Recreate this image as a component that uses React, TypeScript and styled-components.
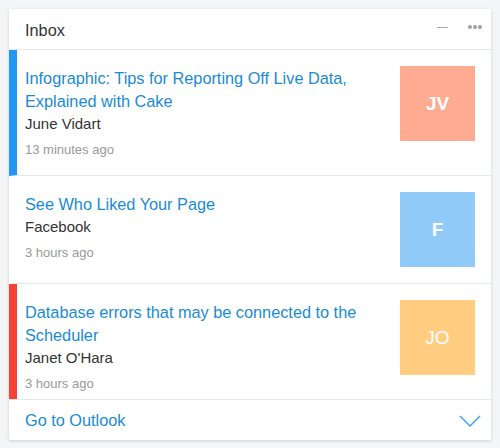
import styled, { createGlobalStyle } from 'styled-components';

const GlobalStyle = createGlobalStyle`
    body {
        margin: 0;
        background: #f4f5f7;
        font-family: "Liberation Sans", Arial, sans-serif;
    }
`;

const Card = styled.div`
    width: 482px;
    margin: 9px;
    background: #fff;
    box-shadow: 0 1px 3px rgba(0, 0, 0, 0.16);
`;

const Header = styled.div`
    display: flex;
    align-items: center;
    justify-content: space-between;
    height: 41px;
    padding: 2px 9px 0 16px;
    box-sizing: border-box;
    border-bottom: 1px solid #e6e7e8;
`;

const Title = styled.h3`
    margin: 0;
    font-size: 16.3px;
    font-weight: normal;
    color: #333;
`;

const Tools = styled.div`
    display: flex;
    align-items: center;
    gap: 20px;
    align-self: flex-start;
    padding-top: 14px;
`;

const Dash = styled.span`
    display: block;
    width: 11px;
    height: 1px;
    background: #a9a9a9;
`;

const Dots = styled.span`
    display: flex;
    gap: 1px;

    & > i {
        display: block;
        width: 4px;
        height: 4px;
        border-radius: 50%;
        background: #a0a0a0;
    }
`;

const List = styled.div`
    height: 349px;
    overflow: hidden;
`;

const Item = styled.div<{ $accent?: string }>`
    display: flex;
    justify-content: space-between;
    gap: 12px;
    padding: 16px 16px 16px 8px;
    border-left: 8px solid ${p => p.$accent || '#fff'};
    border-bottom: 1px solid #e6e7e8;
`;

const Body = styled.div`
    display: flex;
    flex-direction: column;
    padding-top: 1px;
`;

const Subject = styled.a`
    font-size: 16.3px;
    line-height: 23px;
    color: #1a8bd3;
    text-decoration: none;
`;

const Sender = styled.p`
    margin: 0;
    font-size: 15px;
    line-height: 21px;
    color: #333;
`;

const Time = styled.p`
    margin: 7px 0 0;
    font-size: 13px;
    line-height: 18px;
    color: #999;
`;

const Avatar = styled.div<{ $bg: string; $bold?: boolean }>`
    display: flex;
    align-items: center;
    justify-content: center;
    flex-shrink: 0;
    width: 75px;
    height: 75px;
    background: ${p => p.$bg};
    color: #fff;
    font-size: 19px;
    font-weight: ${p => (p.$bold ? 'bold' : 'normal')};
`;

const Footer = styled.div`
    display: flex;
    align-items: center;
    justify-content: space-between;
    height: 41px;
    padding: 1px 10px 0 16px;
    box-sizing: border-box;
    border-top: 1px solid #e6e7e8;
`;

const FooterLink = styled.a`
    font-size: 16.3px;
    color: #1a8bd3;
    text-decoration: none;
`;

interface Mail {
    subject: string,
    sender: string,
    time: string,
    initials: string,
    color: string,
    bold?: boolean,
    accent?: string
}

const mails: Mail[] = [
    {
        subject: 'Infographic: Tips for Reporting Off Live Data, Explained with Cake',
        sender: 'June Vidart',
        time: '13 minutes ago',
        initials: 'JV',
        color: '#ffab91',
        bold: true,
        accent: '#2196f3'
    },
    {
        subject: 'See Who Liked Your Page',
        sender: 'Facebook',
        time: '3 hours ago',
        initials: 'F',
        color: '#90caf9',
        bold: true
    },
    {
        subject: 'Database errors that may be connected to the Scheduler',
        sender: "Janet O'Hara",
        time: '3 hours ago',
        initials: 'JO',
        color: '#ffcc80',
        accent: '#f44336'
    }
];

export default function App() {
    return (
        <>
            <GlobalStyle />
            <Card>
                <Header>
                    <Title>Inbox</Title>
                    <Tools>
                        <Dash />
                        <Dots><i /><i /><i /></Dots>
                    </Tools>
                </Header>
                <List>
                    {mails.map(m => (
                        <Item key={m.subject} $accent={m.accent}>
                            <Body>
                                <Subject href="#">{m.subject}</Subject>
                                <Sender>{m.sender}</Sender>
                                <Time>{m.time}</Time>
                            </Body>
                            <Avatar $bg={m.color} $bold={m.bold}>{m.initials}</Avatar>
                        </Item>
                    ))}
                </List>
                <Footer>
                    <FooterLink href="#">Go to Outlook</FooterLink>
                    <svg width="22" height="12" viewBox="0 0 22 12">
                        <polyline points="1,1 11,11 21,1" fill="none" stroke="#42a5f5" strokeWidth="1.5" />
                    </svg>
                </Footer>
            </Card>
        </>
    );
}
